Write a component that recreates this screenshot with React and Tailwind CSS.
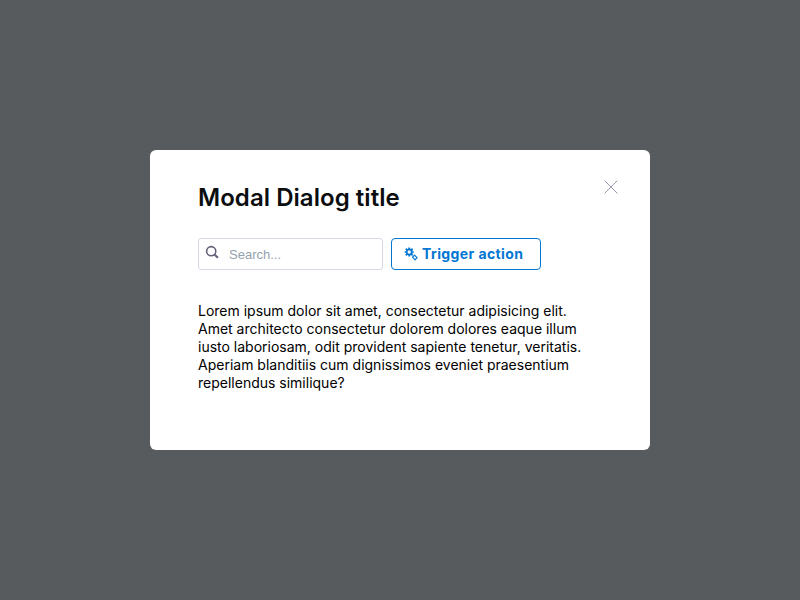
import React from "react";

function SearchIcon() {
  return (
    <svg className="h-4 w-4 shrink-0" viewBox="0 0 16 16" fill="none" stroke="#626078" strokeWidth="1.6" strokeLinecap="round">
      <circle cx="6.2" cy="6.2" r="4.6" />
      <path d="M9.7 9.7 12.4 12.3" strokeWidth="1.9" />
    </svg>
  );
}

function GearsIcon() {
  return (
    <svg className="h-[14px] w-[14px] shrink-0" viewBox="0 0 14 14" fill="none" stroke="#0176d3">
      <circle cx="5.2" cy="5" r="2.6" strokeWidth="1.8" />
      <path d="M5.2.5V2M5.2 8v1.5M.7 5h1.5M8.2 5h1.5M1.8 1.6l1.2 1.2M7.4 7.2l1.2 1.2M1.8 8.4l1.2-1.2M7.4 2.8l1.2-1.2" strokeWidth="1.7" />
      <path d="M8.5 10.2 10.5 8.2 13.1 10.6 11.1 12.8Z" strokeWidth="1.2" strokeLinejoin="round" />
    </svg>
  );
}

export default function App() {
  return (
    <div className="flex h-[600px] w-[800px] items-center justify-center bg-[#585b5d] font-['Inter',sans-serif] text-black">
      <div role="dialog" className="h-[300px] w-[500px] rounded-md bg-white px-8 pt-6">
        <div className="flex justify-between pl-4">
          <h1 className="mt-[9px] text-2xl leading-[30px] font-semibold tracking-[0.05px] text-[#0c0d0f]">Modal Dialog title</h1>
          <button aria-label="Close" className="mt-[6px] h-[14px] w-[14px]">
            <svg viewBox="0 0 14 14" className="block h-[14px] w-[14px]" stroke="#9a9ab2" strokeWidth="1" strokeLinecap="round">
              <path d="M.9.9 13.1 13.1M13.1.9.9 13.1" />
            </svg>
          </button>
        </div>
        <div className="mt-[25px] flex gap-2 pl-4">
          <label className="flex h-8 w-[185px] rounded-[3px] border border-[#d8d8e6] pt-[6px] pl-[6px]">
            <SearchIcon />
            <input placeholder="Search..." className="-mt-px ml-2 h-5 w-32 font-['Liberation_Sans',sans-serif] text-[13px] outline-none placeholder:text-[#94a1ae]" />
          </label>
          <button className="flex h-8 w-[150px] items-center rounded border border-[#0176d3] pl-3 text-sm font-bold tracking-[0.4px] text-[#0176d3]">
            <GearsIcon />
            <span className="ml-1">Trigger action</span>
          </button>
        </div>
        <p className="mt-8 pl-4 text-sm leading-[18px] whitespace-nowrap">
          Lorem ipsum dolor sit amet, consectetur adipisicing elit.<br />
          Amet architecto consectetur dolorem dolores eaque illum<br />
          iusto laboriosam, odit provident sapiente tenetur, veritatis.<br />
          Aperiam blanditiis cum dignissimos eveniet praesentium<br />
          repellendus similique?
        </p>
      </div>
    </div>
  );
}
